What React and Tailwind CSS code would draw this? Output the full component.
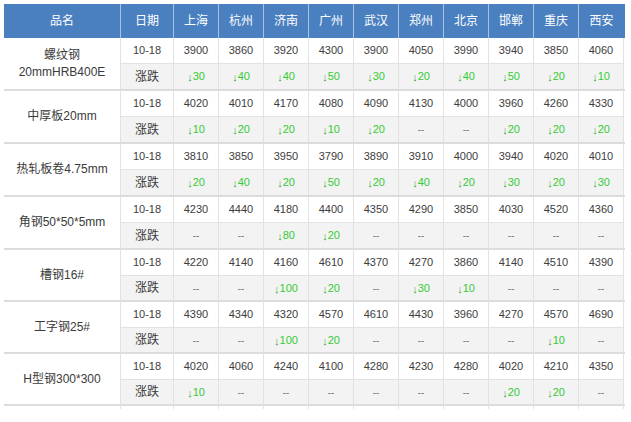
const CITIES = ["上海", "杭州", "济南", "广州", "武汉", "郑州", "北京", "邯郸", "重庆", "西安"];

const ROWS = [
  {
    name: ["螺纹钢", "20mmHRB400E"],
    prices: [3900, 3860, 3920, 4300, 3900, 4050, 3990, 3940, 3850, 4060],
    changes: [30, 40, 40, 50, 30, 20, 40, 50, 20, 10],
  },
  {
    name: ["中厚板20mm"],
    prices: [4020, 4010, 4170, 4080, 4090, 4130, 4000, 3960, 4260, 4330],
    changes: [10, 20, 20, 10, 20, null, null, 20, 20, 20],
  },
  {
    name: ["热轧板卷4.75mm"],
    prices: [3810, 3850, 3950, 3790, 3890, 3910, 4000, 3940, 4020, 4010],
    changes: [20, 40, 20, 50, 20, 40, 20, 30, 20, 30],
  },
  {
    name: ["角钢50*50*5mm"],
    prices: [4230, 4440, 4180, 4400, 4350, 4290, 3850, 4030, 4520, 4360],
    changes: [null, null, 80, 20, null, null, null, null, null, null],
  },
  {
    name: ["槽钢16#"],
    prices: [4220, 4140, 4160, 4610, 4370, 4270, 3860, 4140, 4510, 4390],
    changes: [null, null, 100, 20, null, 30, 10, null, null, null],
  },
  {
    name: ["工字钢25#"],
    prices: [4390, 4340, 4320, 4570, 4610, 4430, 3960, 4270, 4570, 4690],
    changes: [null, null, 100, 20, null, null, null, null, 10, null],
  },
  {
    name: ["H型钢300*300"],
    prices: [4020, 4060, 4240, 4100, 4280, 4230, 4280, 4020, 4210, 4350],
    changes: [10, null, null, null, null, null, null, 20, 20, null],
  },
];

function Change({ value }) {
  if (value == null) {
    return <span className="text-[#777] text-[10px]">--</span>;
  }
  return (
    <span className="text-[#3c3] text-[11px]">
      <span className="text-[#41a841] text-[11px] relative top-[1px]">↓</span>
      {value}
    </span>
  );
}

function Group({ row, index }) {
  const short = index >= 4;
  return (
    <div className="flex border-b-2 border-[#dcdcdc]">
      <div className="w-[117px] shrink-0 border-r border-[#e2e2e2] flex flex-col items-center justify-center text-[12px] leading-[17px] text-[#3a3a3a] bg-white">
        {row.name.map((line) => (
          <span key={line}>{line}</span>
        ))}
      </div>
      <div className="flex flex-col">
        <div className="flex h-[26px] border-b border-[#e3e3e3] bg-white text-[11px] text-[#3d3d3d]">
          <div className="w-[53px] shrink-0 border-r border-[#e2e2e2] flex items-center justify-center">
            10-18
          </div>
          {row.prices.map((p, i) => (
            <div
              key={i}
              className="w-[45px] shrink-0 border-r border-[#e2e2e2] flex items-center justify-center"
            >
              {p}
            </div>
          ))}
        </div>
        <div className={`flex bg-[#f3f3f3] ${short ? "h-[24px]" : "h-[25px]"}`}>
          <div className="w-[53px] shrink-0 border-r border-[#e2e2e2] flex items-center justify-center text-[12px] text-[#3a3a3a]">
            涨跌
          </div>
          {row.changes.map((c, i) => (
            <div
              key={i}
              className="w-[45px] shrink-0 border-r border-[#e2e2e2] flex items-center justify-center"
            >
              <Change value={c} />
            </div>
          ))}
        </div>
      </div>
    </div>
  );
}

export default function App() {
  return (
    <div className="w-[631px] h-[422px] bg-white pt-[4px] pl-[4px] font-['Liberation_Sans','Noto_Sans_CJK_SC',sans-serif]">
      <div className="w-[621px]">
        {/* Header */}
        <div className="flex h-[34px] bg-[#4a80c0] text-white text-[12px]">
          <div className="w-[117px] shrink-0 border-r border-[#a9c2e2] flex items-center justify-center">
            品名
          </div>
          <div className="w-[53px] shrink-0 border-r border-[#a9c2e2] flex items-center justify-center">
            日期
          </div>
          {CITIES.map((c) => (
            <div
              key={c}
              className="w-[45px] shrink-0 border-r border-[#a9c2e2] last:border-r-0 flex items-center justify-center"
            >
              {c}
            </div>
          ))}
        </div>

        {/* Body */}
        {ROWS.map((row, i) => (
          <Group key={i} row={row} index={i} />
        ))}

        {/* cut-off next row */}
        <div className="flex h-[3px]">
          <div className="w-[117px] shrink-0 border-r border-[#e2e2e2]" />
          <div className="w-[53px] shrink-0 border-r border-[#e2e2e2]" />
          {CITIES.map((c) => (
            <div key={c} className="w-[45px] shrink-0 border-r border-[#e2e2e2]" />
          ))}
        </div>
      </div>
    </div>
  );
}
